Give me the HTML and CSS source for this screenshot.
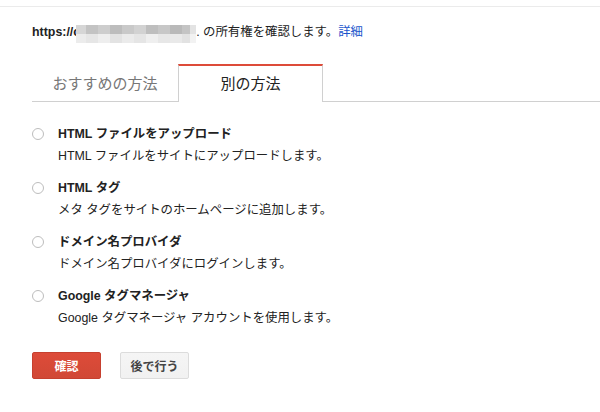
FILE: index.html
```html
<!DOCTYPE html>
<html lang="ja">
<head>
<meta charset="utf-8">
<link rel="stylesheet" href="styles.css">
</head>
<body>
<div class="topbar"></div>
<div class="main">
  <p class="intro"><b>https://c</b><span class="blur"></span>. の所有権を確認します。<a href="#" class="link">詳細</a></p>
  <div class="tabs">
    <div class="tab tab-rec">おすすめの方法</div>
    <div class="tab tab-alt active">別の方法</div>
  </div>
  <ul class="options">
    <li class="option">
      <span class="radio"></span>
      <div class="opt-text">
        <div class="opt-title">HTML ファイルをアップロード</div>
        <div class="opt-desc">HTML ファイルをサイトにアップロードします。</div>
      </div>
    </li>
    <li class="option">
      <span class="radio"></span>
      <div class="opt-text">
        <div class="opt-title">HTML タグ</div>
        <div class="opt-desc">メタ タグをサイトのホームページに追加します。</div>
      </div>
    </li>
    <li class="option">
      <span class="radio"></span>
      <div class="opt-text">
        <div class="opt-title">ドメイン名プロバイダ</div>
        <div class="opt-desc">ドメイン名プロバイダにログインします。</div>
      </div>
    </li>
    <li class="option">
      <span class="radio"></span>
      <div class="opt-text">
        <div class="opt-title">Google タグマネージャ</div>
        <div class="opt-desc">Google タグマネージャ アカウントを使用します。</div>
      </div>
    </li>
  </ul>
  <div class="actions">
    <button class="btn btn-primary">確認</button>
    <button class="btn btn-default">後で行う</button>
  </div>
</div>
</body>
</html>
```

FILE: styles.css
```css
html, body {
  margin: 0;
  padding: 0;
  background: #fff;
}
body {
  font-family: "Liberation Sans", Arial, "Noto Sans CJK JP", sans-serif;
  font-size: 12.4px;
  color: #222;
}
.topbar {
  height: 6px;
  border-bottom: 1px solid #ebebeb;
}
.main {
  padding-left: 32px;
}
.intro {
  margin: 17px 0 0 0;
  line-height: 16px;
  white-space: nowrap;
}
.intro b {
  font-weight: bold;
}
.blur {
  display: inline-block;
  width: 120px;
  height: 18px;
  margin-left: -4px;
  vertical-align: -7px;
  background-image:
    linear-gradient(to right,
      #d6d6d6 0 10px, #c3c3c3 10px 22px, #cdcdcd 22px 34px, #bdbdbd 34px 46px,
      #c9c9c9 46px 58px, #d2d2d2 58px 70px, #bebebe 70px 82px, #c7c7c7 82px 94px,
      #b9b9b9 94px 106px, #c4c4c4 106px 114px, #e3e3e3 114px 120px),
    linear-gradient(to right,
      #ececec 0 10px, #e6e6e6 10px 22px, #eeeeee 22px 34px, #e3e3e3 34px 46px,
      #ebebeb 46px 58px, #e5e5e5 58px 70px, #efefef 70px 82px, #e7e7e7 82px 94px,
      #e9e9e9 94px 106px, #e2e2e2 106px 114px, #f2f2f2 114px 120px);
  background-size: 100% 9px, 100% 9px;
  background-position: 0 0, 0 9px;
  background-repeat: no-repeat;
}
.link {
  color: #1a55cc;
  text-decoration: none;
}
.tabs {
  display: flex;
  margin-top: 21px;
  border-bottom: 1px solid #d0d0d0;
  height: 37px;
}
.tab {
  box-sizing: border-box;
  height: 38px;
  font-size: 15px;
  line-height: 36px;
  text-align: center;
  color: #777;
  padding-top: 2px;
}
.tab-rec {
  width: 146px;
}
.tab-alt {
  width: 145px;
}
.tab.active {
  color: #222;
  background: #fff;
  border-top: 2px solid #dd4b39;
  border-left: 1px solid #d0d0d0;
  border-right: 1px solid #d0d0d0;
  padding-top: 0;
  position: relative;
  z-index: 1;
}
.options {
  list-style: none;
  margin: 24px 0 0 0;
  padding: 0;
}
.option {
  display: flex;
  align-items: flex-start;
  margin-bottom: 16px;
}
.option:last-child {
  margin-bottom: 0;
}
.radio {
  box-sizing: border-box;
  width: 12px;
  height: 12px;
  margin-top: 2px;
  margin-right: 14px;
  border: 1px solid #bdbdbd;
  border-radius: 50%;
  background: #fff;
  flex: none;
}
.opt-title {
  font-weight: bold;
  line-height: 16px;
}
.opt-desc {
  line-height: 16px;
  margin-top: 6px;
}
.actions {
  display: flex;
  gap: 19px;
  margin-top: 26px;
}
.btn {
  box-sizing: border-box;
  height: 27px;
  width: 69px;
  border-radius: 2px;
  font-family: "Liberation Sans", Arial, "Noto Sans CJK JP", sans-serif;
  font-size: 12px;
  font-weight: bold;
  padding: 0;
  cursor: pointer;
}
.btn-primary {
  background: linear-gradient(#dd4b39, #d14836);
  border: 1px solid #c6402f;
  color: #fff;
}
.btn-default {
  background: linear-gradient(#f5f5f5, #f1f1f1);
  border: 1px solid #dcdcdc;
  color: #444;
}
```
